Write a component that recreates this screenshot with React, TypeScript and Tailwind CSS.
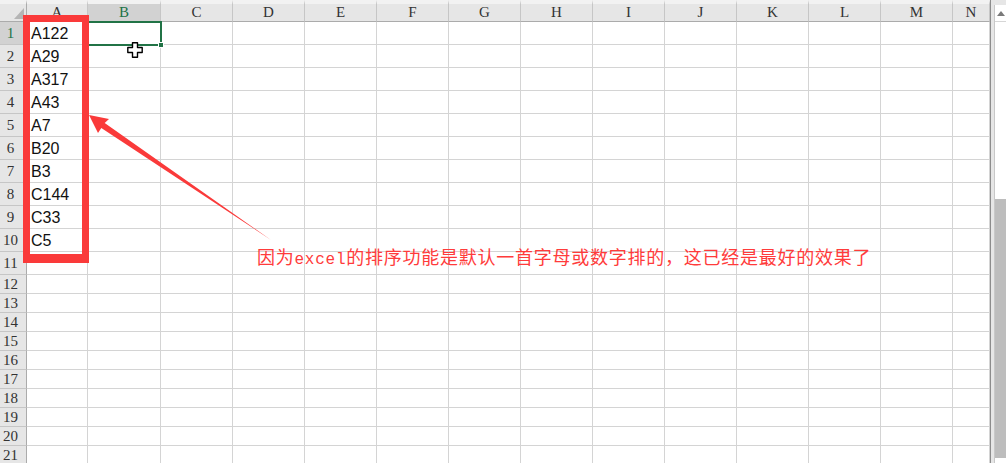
import React from "react"

const cols = ["A", "B", "C", "D", "E", "F", "G", "H", "I", "J", "K", "L", "M", "N"]
const values = ["A122", "A29", "A317", "A43", "A7", "B20", "B3", "C144", "C33", "C5"]
const rowCount = 21

const serif = { fontFamily: '"Liberation Serif", "DejaVu Serif", serif' }

function Corner() {
  return (
    <div className="relative bg-[#e6e6e6] border-t-4 border-t-[#f2f2f2] border-r border-b border-r-[#ababab] border-b-[#ababab]">
      <svg className="absolute left-[14px] top-[4px]" width="11" height="12" viewBox="0 0 11 12">
        <polygon points="10,0 10,11 0,11" fill="#b5b5b5" />
      </svg>
    </div>
  )
}

function ColHeader({ label }: { label: string }) {
  const active = label === "B"
  return (
    <div
      style={serif}
      className={
        "flex items-center justify-center text-[15px] border-t-4 border-t-[#f2f2f2] border-r border-b border-r-[#c6c6c6] border-b-[#ababab] " +
        (active ? "bg-[#d2d2d2] text-[#217346]" : "bg-[#e6e6e6] text-[#333]")
      }
    >
      {label}
    </div>
  )
}

function RowHeader({ n }: { n: number }) {
  const active = n === 1
  return (
    <div
      style={serif}
      className={
        "flex items-center text-[15px] border-r border-b border-r-[#ababab] border-b-[#c6c6c6] " +
        (active ? "bg-[#d2d2d2] text-[#217346]" : "bg-[#e6e6e6] text-[#333]")
      }
    >
      <span className="w-[21px] text-center">{n}</span>
    </div>
  )
}

function Cell({ text }: { text?: string }) {
  return (
    <div
      className="border-r border-b border-[#d4d4d4] bg-white pl-[4px] text-[16px] leading-[24px] text-[#111] whitespace-nowrap"
      style={{ fontFamily: '"Liberation Sans", Arial, sans-serif' }}
    >
      {text}
    </div>
  )
}

function Scrollbar() {
  return (
    <div className="flex flex-col w-[15px] h-full bg-[#e6e6e6] pt-[5px] pl-[3px]">
      <div className="flex-1 flex flex-col bg-white border-l border-[#c8c8c8]">
        <div className="h-[17px] flex items-center justify-center border-b border-[#d6d6d6]">
          <svg width="8" height="5" viewBox="0 0 8 5">
            <polygon points="4,0 8,5 0,5" fill="#7a7a7a" />
          </svg>
        </div>
        <div className="h-[177px]" />
        <div className="flex-1 bg-[#bdbdbd]" />
        <div className="h-[5px] bg-white" />
      </div>
    </div>
  )
}

export default function App() {
  return (
    <div className="relative w-[1006px] h-[463px] overflow-hidden bg-white flex">
      <div className="w-[991px] h-full overflow-hidden border-r border-[#8c8c8c]">
        <div className="grid grid-cols-[27px_61px_73px_repeat(11,72px)_37px] grid-rows-[22px_repeat(11,23px)_repeat(10,19px)]">
          <Corner />
          {cols.map((c) => (
            <ColHeader key={c} label={c} />
          ))}
          {Array.from({ length: rowCount }, (_, r) => (
            <React.Fragment key={r}>
              <RowHeader n={r + 1} />
              {cols.map((c) => (
                <Cell key={c} text={c === "A" ? values[r] : undefined} />
              ))}
            </React.Fragment>
          ))}
        </div>
      </div>
      <Scrollbar />

      {/* active cell B1 with fill handle */}
      <div className="absolute left-[87px] top-[21px] w-[75px] h-[25px] border-2 border-[#217346]" />
      <div className="absolute left-[158px] top-[42px] w-[6px] h-[6px] bg-[#217346] border border-white" />

      {/* cell cursor */}
      <svg className="absolute left-[127px] top-[42px]" width="16" height="16" viewBox="0 0 16 16">
        <path
          d="M5.5 0.8h5v4.7h4.7v5h-4.7v4.7h-5v-4.7H0.8v-5h4.7z"
          fill="#fff"
          stroke="#000"
          strokeWidth="1.4"
          strokeLinejoin="round"
        />
      </svg>

      {/* red highlight around column A */}
      <div className="absolute left-[23px] top-[15px] w-[66px] h-[248px] border-[7px] border-b-[9px] border-[#fa3a3a]" />

      {/* arrow */}
      <svg className="absolute left-0 top-0" width="1006" height="463" viewBox="0 0 1006 463">
        <polygon
          points="89,115 109,119 104.7,123 271,240 101.3,128 98,133"
          fill="#fa3a3a"
        />
      </svg>

      <div
        className="absolute left-[257px] top-[247px] text-[18px] leading-[18px] tracking-[0.75px] text-[#ff3b3b] whitespace-nowrap"
        style={{ fontFamily: '"Noto Sans CJK SC", "Noto Sans", sans-serif' }}
      >
        因为
        <span className="text-[16px]" style={{ fontFamily: '"Liberation Mono", monospace' }}>
          excel
        </span>
        的排序功能是默认一首字母或数字排的，这已经是最好的效果了
      </div>
    </div>
  )
}
